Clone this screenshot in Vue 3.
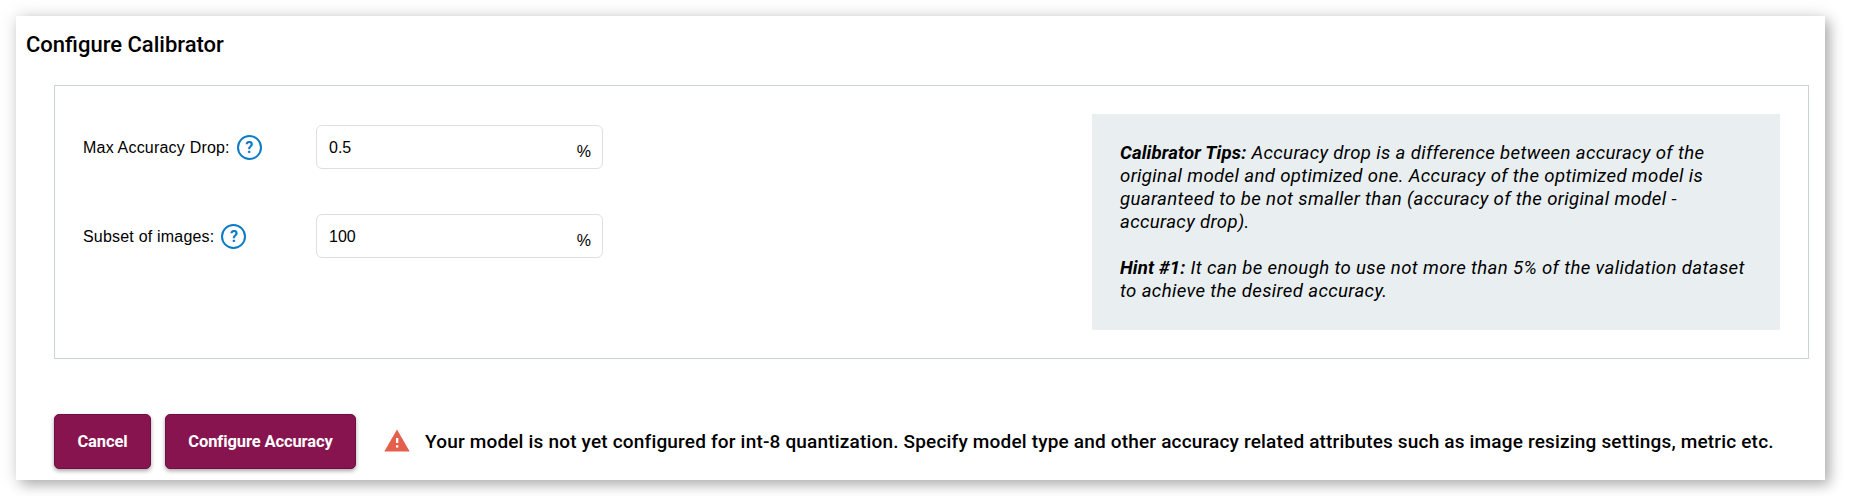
<script setup>
const fields = [
  { label: 'Max Accuracy Drop:', value: '0.5' },
  { label: 'Subset of images:', value: '100' },
]
</script>

<template>
  <main class="card">
    <h1 class="title">Configure Calibrator</h1>
    <section class="panel">
      <div class="fields">
        <div v-for="f in fields" :key="f.label" class="field">
          <div class="label">
            <span class="name">{{ f.label }}</span>
            <span class="help">?</span>
          </div>
          <div class="input">
            <span class="value">{{ f.value }}</span>
            <span class="unit">%</span>
          </div>
        </div>
      </div>
      <aside class="tips">
        <p><b>Calibrator Tips:</b> Accuracy drop is a difference between accuracy of the original model and optimized one. Accuracy of the optimized model is guaranteed to be not smaller than (accuracy of the original model -<br>accuracy drop).</p>
        <p><b>Hint #1:</b> It can be enough to use not more than 5% of the validation dataset to achieve the desired accuracy.</p>
      </aside>
    </section>
    <footer class="actions">
      <button class="btn cancel">Cancel</button>
      <button class="btn configure">Configure Accuracy</button>
      <svg class="warn" width="26" height="23" viewBox="0 0 26 23">
        <path d="M13 0.5 L25.7 22.5 H0.3 Z" fill="#e45f4c" />
        <path d="M12 9h2.3v5h-2.3zM12 16.3h2.3v2.3h-2.3z" fill="#fff" />
      </svg>
      <span class="message">Your model is not yet configured for int-8 quantization. Specify model type and other accuracy related attributes such as image resizing settings, metric etc.</span>
    </footer>
  </main>
</template>

<style>
body {
  background: #fff;
}
</style>

<style scoped>
.card {
  box-sizing: border-box;
  width: 1809px;
  height: 464px;
  margin: 16px;
  padding: 14px 16px 0 38px;
  background: #fff;
  box-shadow: 5px 5px 12px rgba(0, 0, 0, 0.26), 0 0 18px rgba(0, 0, 0, 0.12);
  font-family: Roboto, sans-serif;
  color: #000;
  display: flow-root;
}
.title {
  margin: 0 0 0 -28px;
  height: 55px;
  font-size: 22px;
  line-height: 30px;
  font-weight: 500;
  letter-spacing: 0;
}
.panel {
  box-sizing: border-box;
  height: 274px;
  border: 1px solid #cbd5d6;
  padding: 28px;
  display: flex;
  justify-content: space-between;
}
.fields {
  display: flex;
  flex-direction: column;
  gap: 45px;
  padding-top: 11px;
  font-family: "Liberation Sans", sans-serif;
  font-size: 16px;
}
.field {
  display: flex;
}
.label {
  width: 233px;
  height: 44px;
  display: flex;
  align-items: center;
  gap: 7px;
}
.name {
  padding-top: 2px;
  letter-spacing: 0.2px;
}
.help {
  box-sizing: border-box;
  width: 25px;
  height: 25px;
  border: 2px solid #0b7bc9;
  border-radius: 50%;
  color: #0b7bc9;
  font: 700 16px/21px Roboto, sans-serif;
  text-align: center;
}
.input {
  box-sizing: border-box;
  width: 287px;
  height: 44px;
  padding: 0 11px 0 12px;
  border: 1px solid #dfdfdf;
  border-radius: 6px;
  display: flex;
  align-items: center;
  justify-content: space-between;
}
.value {
  padding-top: 2px;
}
.unit {
  padding-top: 9px;
}
.tips {
  box-sizing: border-box;
  width: 688px;
  height: 216px;
  padding: 28px 28px 0;
  background: #e9eff1;
  font-size: 18.6px;
  line-height: 23px;
  font-style: italic;
  letter-spacing: 0.36px;
}
.tips p {
  margin: 0 0 23px;
}
.tips b {
  letter-spacing: 0.13px;
}
.actions {
  margin-top: 55px;
  display: flex;
  align-items: center;
}
.btn {
  box-sizing: border-box;
  height: 55px;
  padding: 0;
  border: 1px solid #6d1040;
  border-radius: 5px;
  background: #88144f;
  box-shadow: 0 2px 4px rgba(0, 0, 0, 0.35);
  color: #fff;
  font: 700 16.5px/20px Roboto, sans-serif;
  letter-spacing: -0.1px;
}
.cancel {
  width: 97px;
}
.configure {
  width: 191px;
  margin-left: 14px;
}
.warn {
  margin: -2px 0 0 28px;
}
.message {
  margin-left: 15px;
  font-size: 19px;
  font-weight: 500;
  letter-spacing: 0.18px;
  white-space: nowrap;
}
</style>
